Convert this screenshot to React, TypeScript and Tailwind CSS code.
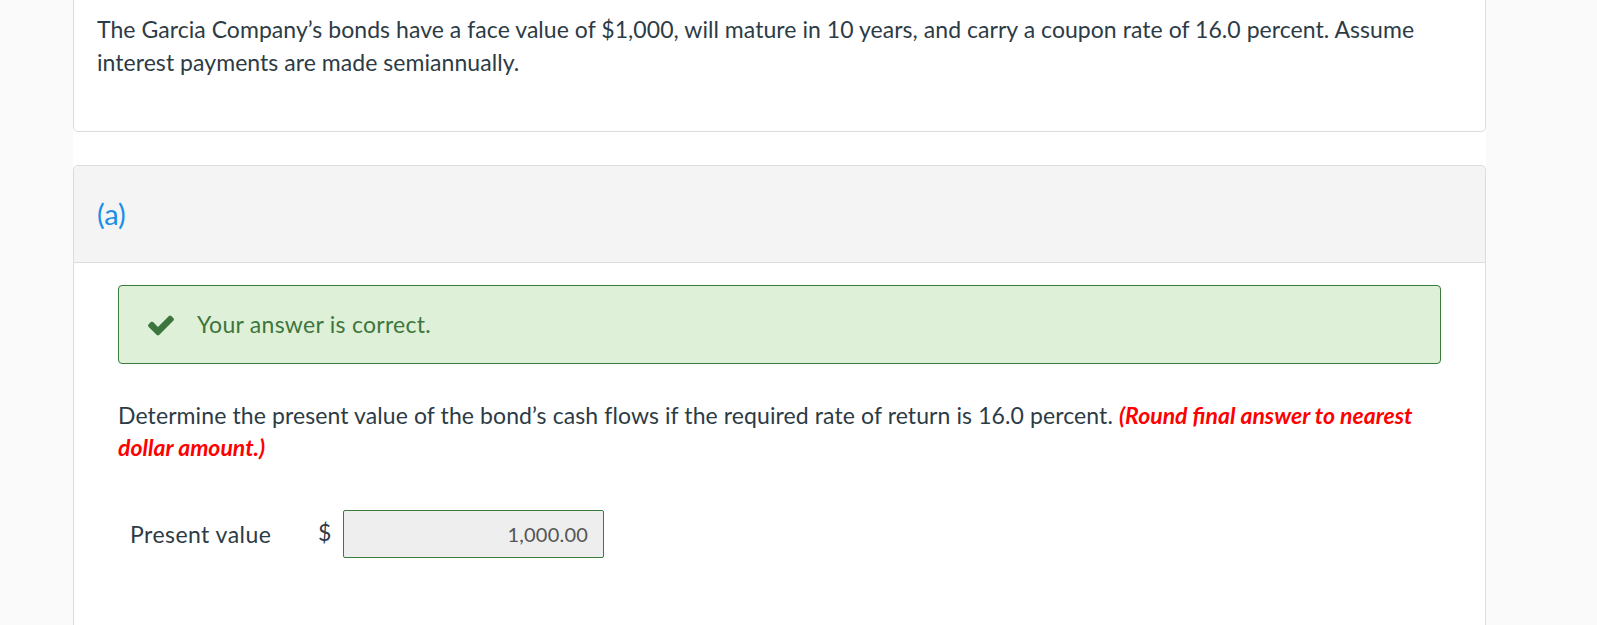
import React from "react";

export default function App() {
  return (
    <div className="min-h-[625px] w-full bg-[#fafafa] flex" style={{ fontFamily: "Lato, 'Open Sans', sans-serif" }}>
      <div className="ml-[73px] w-[1413px] bg-white text-[#2d3b45]">
        <div className="border border-t-0 border-[#dcdcdc] rounded-b-[5px] h-[132px] pl-[23px] pr-[40px] pt-[13px]">
          <p className="text-[23px] leading-[33px] tracking-[0.05px]">
            The Garcia Company’s bonds have a face value of $1,000, will mature in 10 years, and carry a coupon rate of 16.0 percent. Assume interest payments are made semiannually.
          </p>
        </div>
        <div className="mt-[33px] border border-b-0 border-[#dcdcdc] rounded-t-[5px] min-h-[460px]">
          <div className="h-[97px] bg-[#f4f4f4] border-b border-[#dcdcdc] flex items-center pl-[23px] rounded-t-[5px]">
            <span className="text-[29px] text-[#1b8fe6]">(a)</span>
          </div>
          <div className="px-[44px] pt-[22px]">
            <div className="h-[79px] bg-[#dff0d8] border border-[#3c7a3c] rounded-[4px] flex items-center pl-[27px]">
              <svg width="30" height="30" viewBox="0 0 1792 1792" className="text-[#3c763d]">
                <path fill="currentColor" d="M1671 566q0 40-28 68l-724 724-136 136q-28 28-68 28t-68-28l-136-136-362-362q-28-28-28-68t28-68l136-136q28-28 68-28t68 28l294 295 656-657q28-28 68-28t68 28l136 136q28 28 28 68z" />
              </svg>
              <span className="ml-[21px] text-[23px] tracking-[0.27px] text-[#3c763d]">Your answer is correct.</span>
            </div>
            <p className="mt-[35px] text-[23px] leading-[32px] tracking-[0.1px] pr-[20px]">
              Determine the present value of the bond’s cash flows if the required rate of return is 16.0 percent.{" "}
              <span className="text-[#ff0000] font-bold italic tracking-[0px]">(Round final answer to nearest dollar amount.)</span>
            </p>
            <div className="mt-[47px] flex items-center pl-[12px]">
              <span className="text-[23px] tracking-[0.45px] w-[188px]">Present value</span>
              <span className="text-[23px] w-[25px] -mt-[4px]">$</span>
              <div className="w-[261px] h-[48px] bg-[#eeeeee] border border-[#3c7a3c] rounded-[2px] flex items-center justify-end pr-[15px] text-[20px] tracking-[0.2px] text-[#555]">
                1,000.00
              </div>
            </div>
          </div>
        </div>
      </div>
    </div>
  );
}
